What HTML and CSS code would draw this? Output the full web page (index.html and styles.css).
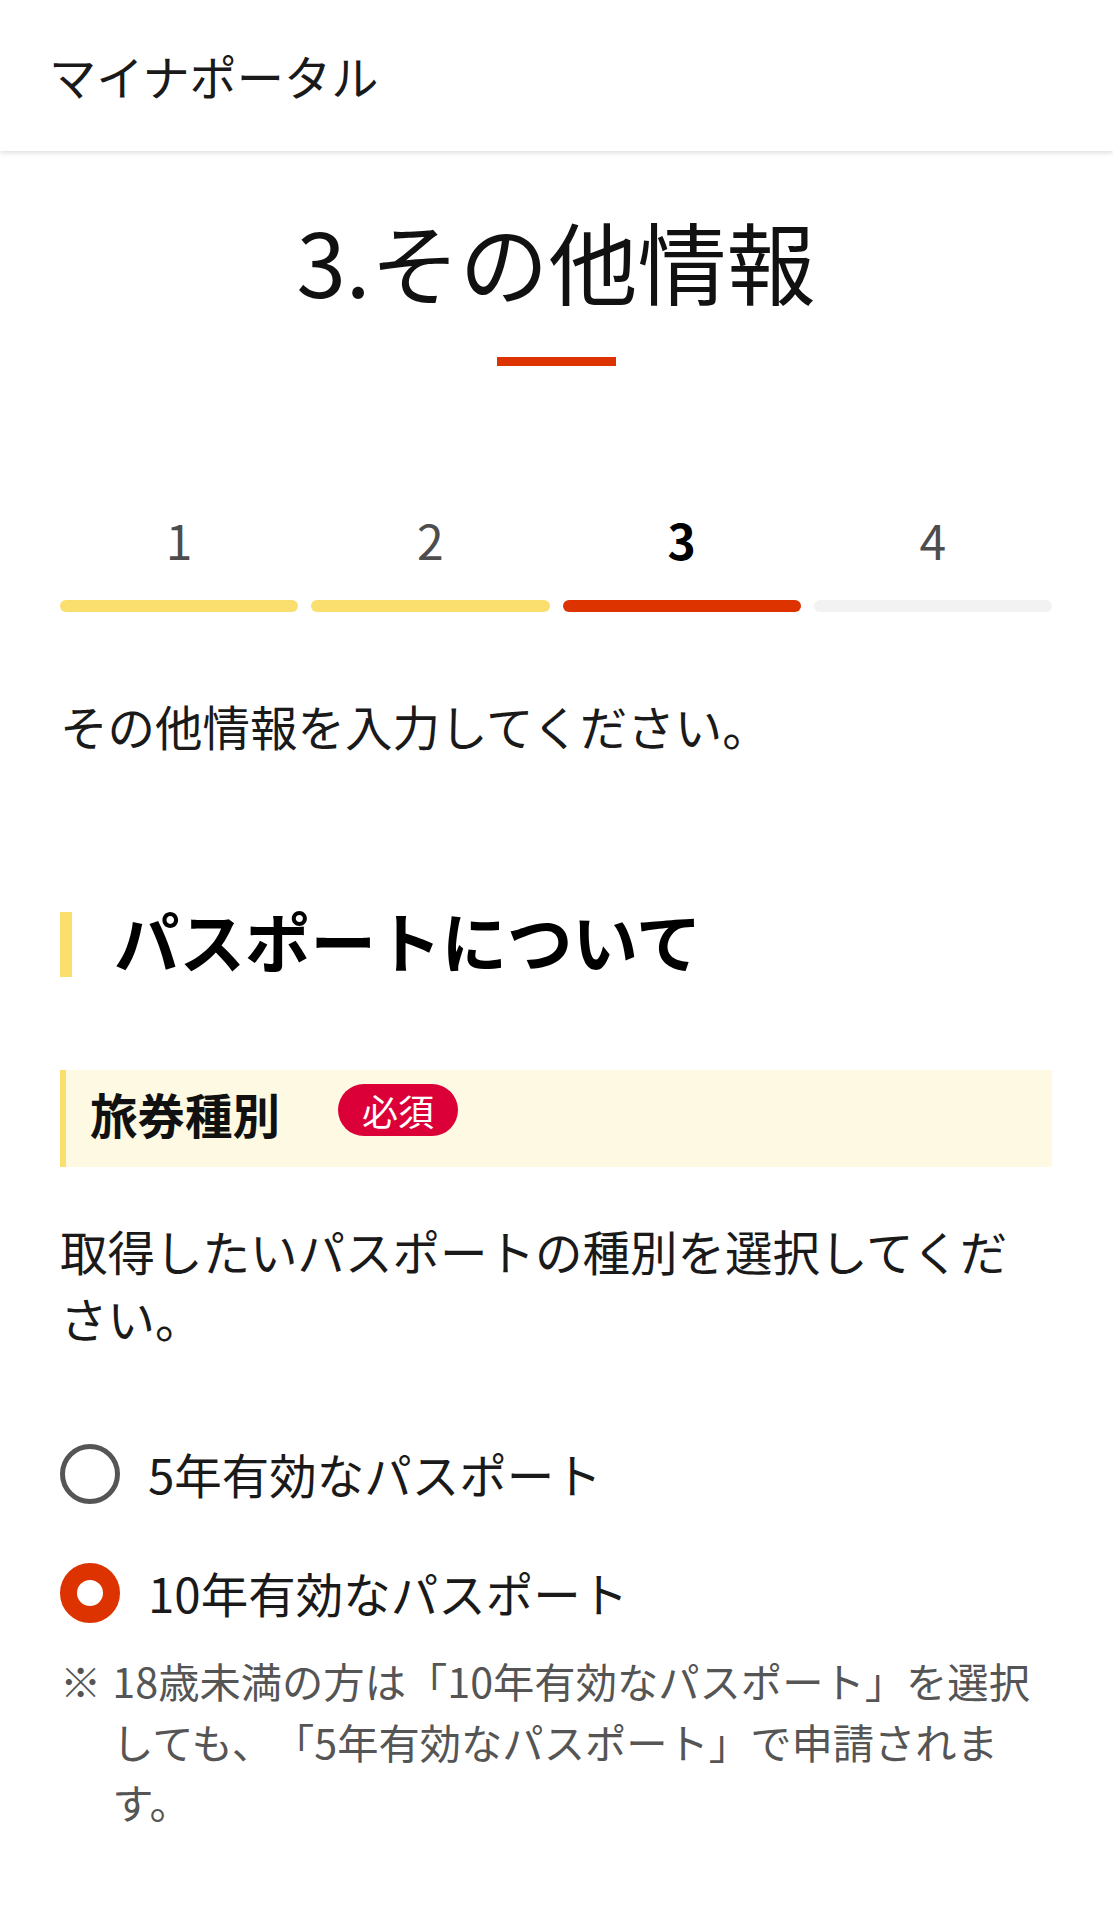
FILE: index.html
```html
<!DOCTYPE html>
<html lang="ja">
<head>
<meta charset="utf-8">
<title>マイナポータル</title>
<link rel="stylesheet" href="styles.css">
</head>
<body>
<header class="site-header">
  <div class="site-title">マイナポータル</div>
</header>
<main class="main">
  <h1 class="page-title">3.その他情報</h1>
  <div class="title-rule"></div>

  <ol class="steps">
    <li class="step done"><span class="step-num">1</span><span class="step-bar"></span></li>
    <li class="step done"><span class="step-num">2</span><span class="step-bar"></span></li>
    <li class="step current"><span class="step-num">3</span><span class="step-bar"></span></li>
    <li class="step"><span class="step-num">4</span><span class="step-bar"></span></li>
  </ol>

  <p class="intro">その他情報を入力してください。</p>

  <h2 class="section-heading">パスポートについて</h2>

  <div class="field-label">
    <span class="field-label-text">旅券種別</span>
    <span class="badge">必須</span>
  </div>

  <p class="field-desc">取得したいパスポートの種別を選択してください。</p>

  <div class="radio-group">
    <label class="radio-row">
      <span class="radio"></span>
      <span class="radio-text">5年有効なパスポート</span>
    </label>
    <label class="radio-row">
      <span class="radio checked"></span>
      <span class="radio-text">10年有効なパスポート</span>
    </label>
  </div>

  <p class="note"><span class="note-mark">※</span><span class="note-text">18歳未満の方は「10年有効なパスポート」を選択しても、「5年有効なパスポート」で申請されます。</span></p>
</main>
</body>
</html>
```
FILE: styles.css
```css
* { box-sizing: border-box; }
html, body { margin: 0; padding: 0; background: #fff; }
body {
  font-family: "Noto Sans CJK JP", "Noto Sans", sans-serif;
  color: #1a1a1a;
  text-spacing-trim: space-all;
}

.site-header {
  height: 151px;
  display: flex;
  align-items: center;
  padding-left: 49px;
  background: #fff;
  box-shadow: 0 2px 5px rgba(0, 0, 0, 0.13);
  position: relative;
}
.site-title {
  font-size: 47.2px;
  line-height: 60px;
  color: #1a1a1a;
}

.main {
  padding: 0 61px 120px 60px;
}

.page-title {
  margin: 47px 0 0;
  font-size: 89px;
  line-height: 123px;
  font-weight: 400;
  text-align: center;
  color: #111;
}
.title-rule {
  width: 119px;
  height: 9px;
  margin: 36px auto 0;
  background: #dd3300;
}

.steps {
  list-style: none;
  margin: 137px 0 0;
  padding: 0;
  display: grid;
  grid-template-columns: repeat(4, 1fr);
  column-gap: 13px;
}
.step {
  display: flex;
  flex-direction: column;
  align-items: stretch;
}
.step-num {
  text-align: center;
  font-size: 48px;
  line-height: 72px;
  color: #4d4d4d;
}
.step-bar {
  margin-top: 25px;
  height: 12px;
  border-radius: 6px;
  background: #f2f2f2;
}
.step.done .step-bar { background: #fadf6e; }
.step.current .step-bar { background: #dd3300; }
.step.current .step-num { color: #000; font-weight: 700; }

.intro {
  margin: 80px 0 0;
  font-size: 47.5px;
  line-height: 67px;
}

.section-heading {
  margin: 153px 0 0;
  border-left: 12px solid #fadf6e;
  padding: 0 0 9px 42px;
  font-size: 65.5px;
  line-height: 56px;
  font-weight: 700;
  color: #000;
}

.field-label {
  margin-top: 93px;
  height: 97px;
  display: flex;
  align-items: center;
  padding: 0 0 10px 24px;
  background: #fef9e3;
  border-left: 6px solid #fadf6e;
}
.field-label-text {
  font-size: 47.5px;
  line-height: 60px;
  font-weight: 700;
  color: #111;
}
.badge {
  margin-left: 58px;
  margin-bottom: 7px;
  height: 52px;
  padding: 0 24px;
  border-radius: 26px;
  background: #dc0039;
  color: #fff;
  font-size: 36px;
  line-height: 52px;
}

.field-desc {
  margin: 50px 0 0;
  font-size: 47.5px;
  line-height: 67px;
}

.radio-group {
  margin-top: 93px;
  display: flex;
  flex-direction: column;
  gap: 59px;
}
.radio-row {
  height: 60px;
  display: flex;
  align-items: center;
  gap: 28px;
}
.radio {
  width: 60px;
  height: 60px;
  flex: none;
  border-radius: 50%;
  border: 5px solid #555;
  background: #fff;
}
.radio.checked {
  border: 17px solid #dd3300;
}
.radio-text {
  font-size: 47.5px;
  line-height: 54px;
}

.note {
  margin: 27px 0 0;
  padding-right: 16px;
  display: flex;
  gap: 11px;
  font-size: 41.3px;
  line-height: 60.5px;
  color: #555;
}
.note-mark { flex: none; }
.note-text { flex: 1; }
```
